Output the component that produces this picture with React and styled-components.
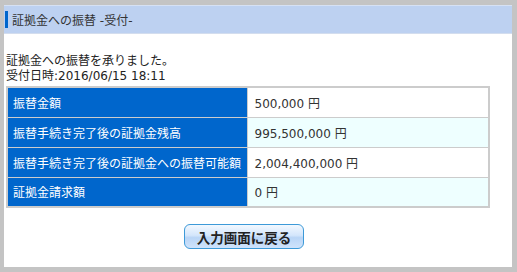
import React from 'react'
import styled, { createGlobalStyle } from 'styled-components'

const GlobalStyle = createGlobalStyle`
  html, body {
    margin: 0;
    padding: 0;
    background: #c4c4c4;
  }
  body {
    font-family: 'DejaVu Sans', 'Noto Sans CJK JP', sans-serif;
    font-size: 12px;
    color: #222;
  }
`

const rows = [
  { label: '振替金額', value: '500,000', stripe: false },
  { label: '振替手続き完了後の証拠金残高', value: '995,500,000', stripe: true },
  { label: '振替手続き完了後の証拠金への振替可能額', value: '2,004,400,000', stripe: false },
  { label: '証拠金請求額', value: '0', stripe: true }
]

const Frame = styled.div`
  height: 272px;
  box-sizing: border-box;
  padding: 5px 5px 5px 4px;
  display: flex;
`

const Panel = styled.div`
  flex: 1;
  background: #fff;
  display: flex;
  flex-direction: column;
`

const PageHeader = styled.div`
  height: 27px;
  border-top: 1px solid #d6e1f4;
  border-bottom: 1px solid #d3ddee;
  background: #bdd1f1;
  display: flex;
  align-items: center;
  gap: 4px;
`

const Accent = styled.span`
  width: 3px;
  height: 17px;
  margin-left: 1px;
  background: #0066cc;
`

const Title = styled.h1`
  margin: 0;
  font-size: 12px;
  font-weight: normal;
  color: #333;
`

const Message = styled.div`
  margin: 20px 0 2px 2px;
  line-height: 15px;
`

const ResultTable = styled.table`
  width: 484px;
  margin-left: 2px;
  border-collapse: collapse;
  border: 2px solid #cccccc;
`

const Label = styled.th`
  width: 240px;
  height: 30px;
  padding: 0 0 0 5px;
  box-sizing: border-box;
  text-align: left;
  font-weight: normal;
  color: #fff;
  background: #0066cc;
  border: 1px solid #cccccc;
`

const Value = styled.td`
  padding: 0 0 0 7px;
  background: ${props => (props.stripe ? '#eeffff' : '#fff')};
  border: 1px solid #cccccc;
  color: #333;
`

const Actions = styled.div`
  width: 484px;
  margin-top: 16px;
  display: flex;
  justify-content: center;
`

const BackButton = styled.button`
  width: 120px;
  height: 25px;
  margin-left: -4px;
  border: 1px solid #3d9ad8;
  border-radius: 6px;
  background: linear-gradient(#f2f8ff 0%, #d4e6fb 45%, #b9d5f6 55%, #cfe3fb 100%);
  font-family: 'Noto Sans CJK JP', sans-serif;
  font-size: 13.5px;
  font-weight: bold;
  color: #222;
  padding: 0;
  cursor: pointer;
`

export default function App () {
  return (
    <>
      <GlobalStyle />
      <Frame>
        <Panel>
          <PageHeader>
            <Accent />
            <Title>証拠金への振替 -受付-</Title>
          </PageHeader>
          <Message>
            証拠金への振替を承りました。<br />
            受付日時:2016/06/15 18:11
          </Message>
          <ResultTable>
            <tbody>
              {rows.map(row => (
                <tr key={row.label}>
                  <Label>{row.label}</Label>
                  <Value stripe={row.stripe}>{row.value} 円</Value>
                </tr>
              ))}
            </tbody>
          </ResultTable>
          <Actions>
            <BackButton type='button'>入力画面に戻る</BackButton>
          </Actions>
        </Panel>
      </Frame>
    </>
  )
}
